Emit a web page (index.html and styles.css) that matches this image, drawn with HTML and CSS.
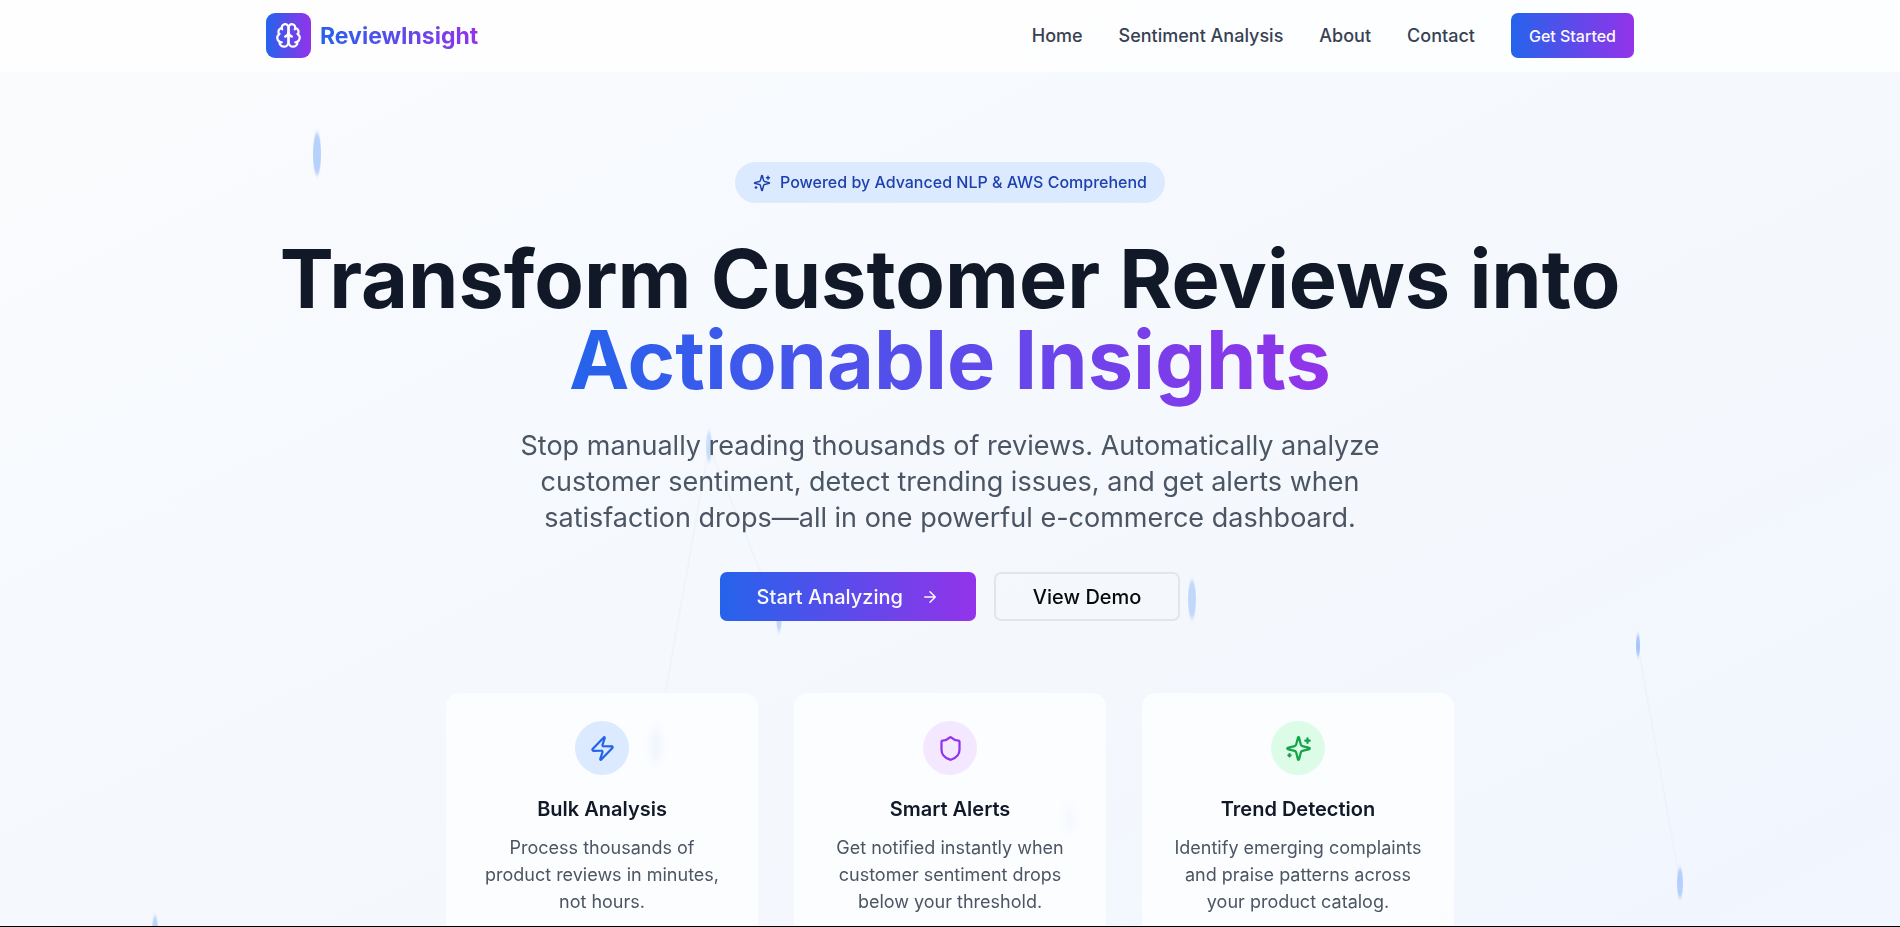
FILE: index.html
```html
<!DOCTYPE html>
<html lang="en">
<head>
<meta charset="utf-8">
<meta name="viewport" content="width=device-width, initial-scale=1">
<title>ReviewInsight</title>
<link rel="stylesheet" href="styles.css">
</head>
<body>
<svg class="symbols" aria-hidden="true">
  <symbol id="sparkles" viewBox="0 0 24 24">
    <path d="M9.937 15.5A2 2 0 0 0 8.5 14.063l-6.135-1.582a.5.5 0 0 1 0-.962L8.5 9.936A2 2 0 0 0 9.937 8.5l1.582-6.135a.5.5 0 0 1 .963 0L14.063 8.5A2 2 0 0 0 15.5 9.937l6.135 1.581a.5.5 0 0 1 0 .964L15.5 14.063a2 2 0 0 0-1.437 1.437l-1.582 6.135a.5.5 0 0 1-.963 0z"/>
    <path d="M20 3v4M22 5h-4M4 17v2M5 18H3"/>
  </symbol>
</svg>
<div class="page">
  <header class="header">
    <div class="container header-row">
      <a class="brand" href="#">
        <span class="brand-mark">
          <svg class="icon icon-lg" viewBox="0 0 24 24" aria-hidden="true">
            <path d="M12 5a3 3 0 1 0-5.997.125 4 4 0 0 0-2.526 5.77 4 4 0 0 0 .556 6.588A4 4 0 1 0 12 18Z"/>
            <path d="M12 5a3 3 0 1 1 5.997.125 4 4 0 0 1 2.526 5.77 4 4 0 0 1-.556 6.588A4 4 0 1 1 12 18Z"/>
            <path d="M15 13a4.5 4.5 0 0 1-3-4 4.5 4.5 0 0 1-3 4"/>
            <path d="M17.599 6.5a3 3 0 0 0 .399-1.375M6.003 5.125A3 3 0 0 0 6.401 6.5M3.477 10.896a4 4 0 0 1 .585-.396M19.938 10.5a4 4 0 0 1 .585.396M6 18a4 4 0 0 1-1.967-.516M19.967 17.484A4 4 0 0 1 18 18"/>
          </svg>
        </span>
        <span class="brand-name gradient-text">ReviewInsight</span>
      </a>
      <nav class="nav" aria-label="Main">
        <a class="nav-link" href="#">Home</a>
        <a class="nav-link" href="#">Sentiment Analysis</a>
        <a class="nav-link" href="#">About</a>
        <a class="nav-link" href="#">Contact</a>
        <button class="button button-primary button-small" type="button">Get Started</button>
      </nav>
    </div>
  </header>
  <main class="hero">
    <svg class="particles" viewBox="0 0 1900 855" preserveAspectRatio="none" aria-hidden="true">
      <filter id="soften" filterUnits="userSpaceOnUse" x="0" y="0" width="1900" height="900">
        <feGaussianBlur stdDeviation="0.4 2"/>
      </filter>
      <g class="links">
        <path d="M709 375 656 675M709 375 779 545"/>
        <path class="link-blue" d="M1638 574 1680 812"/>
      </g>
      <g class="dots" filter="url(#soften)">
        <ellipse cx="317" cy="82" rx="4" ry="21" opacity=".35"/>
        <ellipse cx="709" cy="375" rx="3" ry="15" opacity=".22"/>
        <ellipse cx="779" cy="542" rx="3" ry="18" opacity=".28"/>
        <ellipse cx="1192" cy="528" rx="4" ry="19" opacity=".27"/>
        <ellipse cx="656" cy="674" rx="4" ry="20" opacity=".3"/>
        <ellipse cx="1070" cy="746" rx="3" ry="14" opacity=".25"/>
        <ellipse cx="1638" cy="574" rx="2" ry="11" opacity=".42"/>
        <ellipse cx="1680" cy="812" rx="3" ry="15" opacity=".33"/>
        <ellipse cx="155" cy="860" rx="3" ry="15" opacity=".3"/>
      </g>
    </svg>
    <div class="container hero-content">
      <p class="badge">
        <svg class="icon icon-sm" aria-hidden="true"><use href="#sparkles"/></svg>
        Powered by Advanced NLP &amp; AWS Comprehend
      </p>
      <h1 class="headline">Transform Customer Reviews into <span class="headline-accent gradient-text">Actionable Insights</span></h1>
      <p class="lead">Stop manually reading thousands of reviews. Automatically analyze customer sentiment, detect trending issues, and get alerts when satisfaction drops—all in one powerful e-commerce dashboard.</p>
      <div class="actions">
        <button class="button button-primary button-large" type="button">Start Analyzing
          <svg class="icon icon-sm" viewBox="0 0 24 24" aria-hidden="true"><path d="M5 12h14M12 5l7 7-7 7"/></svg>
        </button>
        <button class="button button-outline button-large" type="button">View Demo</button>
      </div>
      <div class="features">
        <article class="card">
          <span class="card-icon card-icon-blue">
            <svg class="icon icon-lg" viewBox="0 0 24 24" aria-hidden="true"><path d="M4 14a1 1 0 0 1-.78-1.63l9.9-10.2a.5.5 0 0 1 .86.46l-1.92 6.02A1 1 0 0 0 13 10h7a1 1 0 0 1 .78 1.63l-9.9 10.2a.5.5 0 0 1-.86-.46l1.92-6.02A1 1 0 0 0 11 14z"/></svg>
          </span>
          <h2 class="card-title">Bulk Analysis</h2>
          <p class="card-text">Process thousands of product reviews in minutes, not hours.</p>
        </article>
        <article class="card">
          <span class="card-icon card-icon-purple">
            <svg class="icon icon-lg" viewBox="0 0 24 24" aria-hidden="true"><path d="M20 13c0 5-3.5 7.5-7.66 8.95a1 1 0 0 1-.67-.01C7.5 20.5 4 18 4 13V6a1 1 0 0 1 1-1c2 0 4.5-1.2 6.24-2.72a1.17 1.17 0 0 1 1.52 0C14.51 3.81 17 5 19 5a1 1 0 0 1 1 1z"/></svg>
          </span>
          <h2 class="card-title">Smart Alerts</h2>
          <p class="card-text">Get notified instantly when customer sentiment drops below your threshold.</p>
        </article>
        <article class="card">
          <span class="card-icon card-icon-green">
            <svg class="icon icon-lg" aria-hidden="true"><use href="#sparkles"/></svg>
          </span>
          <h2 class="card-title">Trend Detection</h2>
          <p class="card-text">Identify emerging complaints and praise patterns across your product catalog.</p>
        </article>
      </div>
    </div>
  </main>
</div>
</body>
</html>
```
FILE: styles.css
```css
*, *::before, *::after { box-sizing: border-box; }

:root {
  --brand-gradient: linear-gradient(to right, #2563eb, #9333ea);
}

body {
  margin: 0;
  font-family: Inter, "Liberation Sans", sans-serif;
  font-size: 18px;
  line-height: 27px;
  color: #0a0a0a;
}

h1, h2, p { margin: 0; }
a { color: inherit; text-decoration: none; }

.symbols { position: absolute; width: 0; height: 0; }

.page {
  display: flex;
  flex-direction: column;
  height: 100vh;
  overflow: hidden;
  border-bottom: 1px solid #000;
  background: linear-gradient(to bottom right, #fafbfc, #f6f9fe 35%, #f4f8fd 65%, #f1f6ff);
}

.container {
  width: 100%;
  max-width: 1440px;
  margin: 0 auto;
  padding: 0 36px;
}

.icon {
  flex: none;
  fill: none;
  stroke: currentColor;
  stroke-width: 2;
  stroke-linecap: round;
  stroke-linejoin: round;
}
.icon-sm { width: 18px; height: 18px; }
.icon-lg { width: 27px; height: 27px; }

.gradient-text {
  background: var(--brand-gradient);
  -webkit-background-clip: text;
  background-clip: text;
  color: transparent;
}

/* Header */
.header {
  flex: none;
  border-bottom: 1px solid rgba(255, 255, 255, 0.2);
  background: rgba(255, 255, 255, 0.8);
}
.header-row {
  display: flex;
  align-items: center;
  justify-content: space-between;
  height: 71px;
}
.brand { display: flex; align-items: center; gap: 9px; }
.brand-mark {
  display: grid;
  place-items: center;
  width: 45px;
  height: 45px;
  border-radius: 9px;
  background: var(--brand-gradient);
  color: #fff;
}
.brand-name { font-size: 23px; font-weight: 700; line-height: 32px; }
.nav {
  display: flex;
  align-items: center;
  gap: 36px;
  color: #374151;
  font-weight: 500;
}

/* Buttons */
.button {
  display: inline-flex;
  align-items: center;
  justify-content: center;
  gap: 18px;
  border: 0;
  border-radius: 7px;
  font-family: inherit;
  font-weight: 500;
  cursor: pointer;
}
.button-primary { background: var(--brand-gradient); color: #fafafa; }
.button-outline { border: 2px solid #e5e5e5; background: transparent; color: #0a0a0a; }
.button-small { height: 45px; padding: 0 18px; font-size: 16px; }
.button-large { height: 49px; padding: 0 37px; font-size: 20px; }

/* Hero */
.hero { position: relative; flex: 1; min-height: 0; }
.particles { position: absolute; inset: 0; width: 100%; height: 100%; }
.links { fill: none; stroke: #64748b; stroke-opacity: 0.03; stroke-width: 2; }
.link-blue { stroke: #3b82f6; }
.dots { fill: #3b82f6; }

.hero-content {
  position: relative;
  display: flex;
  flex-direction: column;
  align-items: center;
  padding-top: 90px;
  text-align: center;
}
.badge {
  display: flex;
  align-items: center;
  gap: 9px;
  padding: 9px 18px;
  border-radius: 99px;
  background: #dbeafe;
  color: #1e40af;
  font-size: 16px;
  font-weight: 500;
  line-height: 23px;
}
.headline {
  margin-top: 36px;
  color: #111827;
  font-size: 81px;
  font-weight: 700;
  line-height: 81px;
}
/* The bottom padding keeps descenders inside the clipped gradient. */
.headline-accent {
  display: block;
  width: fit-content;
  margin: 0 auto -9px;
  padding-bottom: 9px;
}
.lead {
  max-width: 864px;
  margin-top: 27px;
  color: #4b5563;
  font-size: 27px;
  line-height: 36px;
}
.actions { display: flex; gap: 18px; margin-top: 36px; }

/* Feature cards */
.features {
  display: grid;
  grid-template-columns: repeat(3, 1fr);
  gap: 36px;
  width: 100%;
  max-width: 1008px;
  margin-top: 72px;
}
.card {
  display: flex;
  flex-direction: column;
  align-items: center;
  padding: 28px;
  border-radius: 14px;
  background: rgba(255, 255, 255, 0.7);
  backdrop-filter: blur(4px);
}
.card-icon {
  display: grid;
  place-items: center;
  width: 54px;
  height: 54px;
  border-radius: 50%;
}
.card-icon-blue { background: #dbeafe; color: #2563eb; }
.card-icon-purple { background: #f3e8ff; color: #9333ea; }
.card-icon-green { background: #dcfce7; color: #16a34a; }
.card-title {
  margin-top: 18px;
  color: #111827;
  font-size: 20px;
  font-weight: 600;
  line-height: 32px;
}
.card-text { margin-top: 9px; color: #4b5563; }
```
